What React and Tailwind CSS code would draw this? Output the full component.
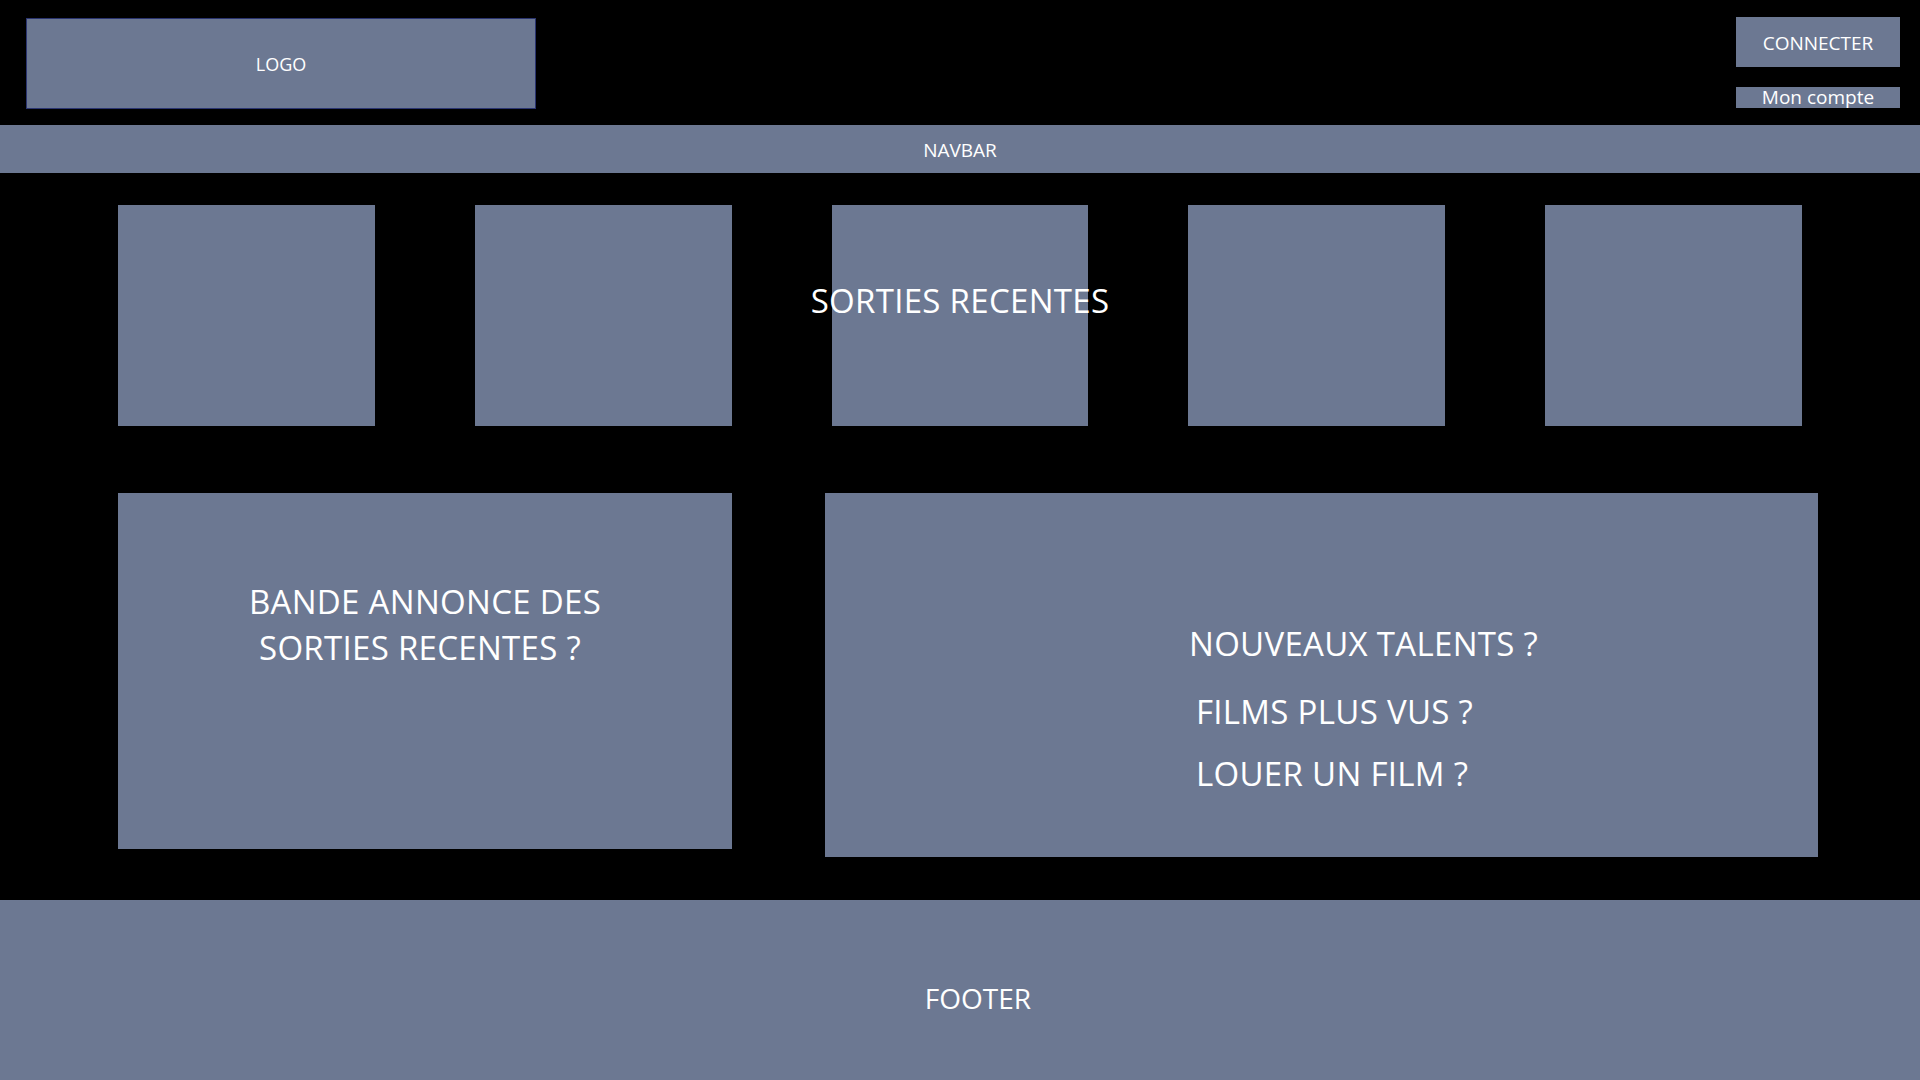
import React from 'react'

const font = { fontFamily: '"Open Sans", "Noto Sans", sans-serif' }

function Card() {
    return <div className="w-[257px] h-[221px] bg-[#6c7892]" />
}

function App() {
    return (
        <div className="w-full h-[1080px] bg-black text-white flex flex-col overflow-hidden" style={font}>
            {/* header */}
            <div className="h-[125px] flex justify-between items-start shrink-0">
                <div className="ml-[26px] mt-[18px] w-[510px] h-[91px] bg-[#6c7892] border border-[#2a3470] flex items-center justify-center text-[18px] pt-[2px]">
                    LOGO
                </div>
                <div className="mt-[17px] mr-[20px] w-[164px] flex flex-col">
                    <button className="h-[50px] bg-[#6c7892] text-[19px] flex items-center justify-center pt-[2px]">
                        CONNECTER
                    </button>
                    <button className="mt-[20px] h-[21px] bg-[#6c7892] text-[19px] leading-[21px] flex items-center justify-center pb-[1px]">
                        Mon compte
                    </button>
                </div>
            </div>

            {/* navbar */}
            <div className="h-[48px] bg-[#6c7892] flex items-center justify-center text-[19px] pt-[2px] shrink-0">
                NAVBAR
            </div>

            {/* sorties recentes */}
            <div className="relative mt-[32px] px-[118px] flex gap-[100px] shrink-0">
                <Card />
                <Card />
                <Card />
                <Card />
                <Card />
                <div className="absolute left-0 right-0 top-[73px] text-center text-[33px] tracking-[0.3px] leading-[46px]">
                    SORTIES RECENTES
                </div>
            </div>

            {/* blocs */}
            <div className="mt-[67px] pl-[118px] flex items-start gap-[93px] shrink-0">
                <div className="w-[614px] h-[356px] bg-[#6c7892] pt-[86px] text-center text-[33px] tracking-[0.3px] leading-[46px]">
                    <p>BANDE ANNONCE DES</p>
                    <p className="pr-[10px]">SORTIES RECENTES ?</p>
                </div>
                <div className="w-[993px] h-[364px] bg-[#6c7892] pt-[128px] pl-[364px] text-[33px] tracking-[0.3px] leading-[46px]">
                    <p>NOUVEAUX TALENTS ?</p>
                    <p className="mt-[22px] ml-[7px]">FILMS PLUS VUS ?</p>
                    <p className="mt-[16px] ml-[7px]">LOUER UN FILM ?</p>
                </div>
            </div>

            {/* footer */}
            <div className="mt-auto h-[180px] bg-[#6c7892] flex items-center justify-center pl-[36px] pt-[16px] text-[28px] shrink-0">
                FOOTER
            </div>
        </div>
    )
}

export default App
